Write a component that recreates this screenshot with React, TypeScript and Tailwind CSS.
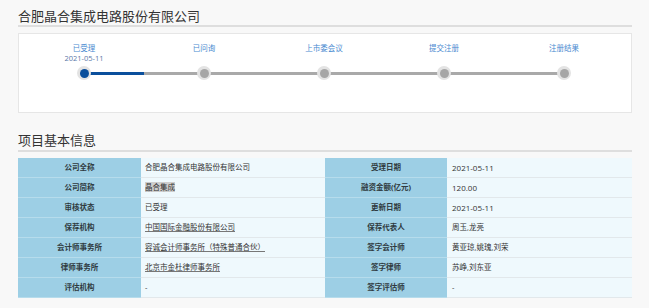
import React from "react";

const FONT = { fontFamily: '"Open Sans", "Noto Sans CJK SC", sans-serif' };

const steps = [
  { label: "已受理", date: "2021-05-11", active: true },
  { label: "已问询" },
  { label: "上市委会议" },
  { label: "提交注册" },
  { label: "注册结果" },
];

type Cell = { text: string; link?: boolean; hl?: boolean; num?: boolean };
const rows: [string, Cell, string, Cell][] = [
  ["公司全称", { text: "合肥晶合集成电路股份有限公司" }, "受理日期", { text: "2021-05-11", num: true }],
  ["公司简称", { text: "晶合集成", hl: true }, "融资金额(亿元)", { text: "120.00", num: true }],
  ["审核状态", { text: "已受理" }, "更新日期", { text: "2021-05-11", num: true }],
  ["保荐机构", { text: "中国国际金融股份有限公司", link: true }, "保荐代表人", { text: "周玉,龙亮" }],
  ["会计师事务所", { text: "容诚会计师事务所（特殊普通合伙）", link: true }, "签字会计师", { text: "黄亚琼,姚瑰,刘荣" }],
  ["律师事务所", { text: "北京市金杜律师事务所", link: true }, "签字律师", { text: "苏峥,刘东亚" }],
  ["评估机构", { text: "-" }, "签字评估师", { text: "-" }],
];

function Value({ c }: { c: Cell }) {
  if (c.hl) return <span className="bg-[#cdcdcd]">{c.text}</span>;
  if (c.link) return <span className="underline decoration-[#777] underline-offset-[1px]">{c.text}</span>;
  if (c.num) return <span className="text-[8px]">{c.text}</span>;
  return <span>{c.text}</span>;
}

export default function App() {
  return (
    <div className="min-h-[308px] w-[649px] bg-[#f8f8f8] text-[#333]" style={FONT}>
      <div className="ml-[18px] w-[614px]">
        <div className="pt-[7px] text-[13px] leading-[18px] text-[#333] border-b-2 border-[#dedede]">
          合肥晶合集成电路股份有限公司
        </div>
        <div className="mt-[6px] h-[80px] bg-white border border-[#e6e6e6] pl-[5px] pt-[9px]">
          <div className="flex">
            {steps.map((s, i) => (
              <div key={i} className="w-[120px] flex flex-col items-center">
                <div className="text-[7.5px] leading-[10px] text-[#4a8ad0]">{s.label}</div>
                <div className="text-[7.5px] leading-[10px] h-[10px] text-[#5a78a8]">{s.date ?? ""}</div>
                <div className="relative w-full h-[14px] mt-[3px] flex items-center">
                  <div className={"h-[3px] w-1/2 " + (i === 0 ? "bg-transparent" : "bg-[#a9a9a9]")} />
                  <div
                    className={
                      "h-[3px] w-1/2 " +
                      (i === steps.length - 1 ? "bg-transparent" : i === 0 ? "bg-[#0b4f9c]" : "bg-[#a9a9a9]")
                    }
                  />
                  <div className="absolute left-1/2 top-1/2 -translate-x-1/2 -translate-y-1/2 w-[14px] h-[14px] rounded-full bg-[#e3e3e3] flex items-center justify-center">
                    <div className={"w-[9px] h-[9px] rounded-full " + (s.active ? "bg-[#0b4f9c]" : "bg-[#a6a6a6]")} />
                  </div>
                </div>
              </div>
            ))}
          </div>
        </div>
        <div className="mt-[17px] text-[13px] leading-[20px] text-[#333] border-b-2 border-[#dedede]">
          项目基本信息
        </div>
        <div className="mt-[6px] grid grid-cols-[123px_184px_122px_185px] text-[7.5px] leading-[19px]">
          {rows.map((r, i) => (
            <React.Fragment key={i}>
              <div className="h-[20px] bg-[#9dcfe5] border-b border-[#b6dcec] text-center font-bold text-[#2f3a40]">{r[0]}</div>
              <div className="h-[20px] bg-[#eff9fd] border-b border-[#e2e8eb] pl-[4px] whitespace-nowrap">
                <Value c={r[1]} />
              </div>
              <div className="h-[20px] bg-[#9dcfe5] border-b border-[#b6dcec] text-center font-bold text-[#2f3a40]">{r[2]}</div>
              <div className="h-[20px] bg-[#eff9fd] border-b border-[#e2e8eb] pl-[5px] whitespace-nowrap">
                <Value c={r[3]} />
              </div>
            </React.Fragment>
          ))}
        </div>
      </div>
    </div>
  );
}
